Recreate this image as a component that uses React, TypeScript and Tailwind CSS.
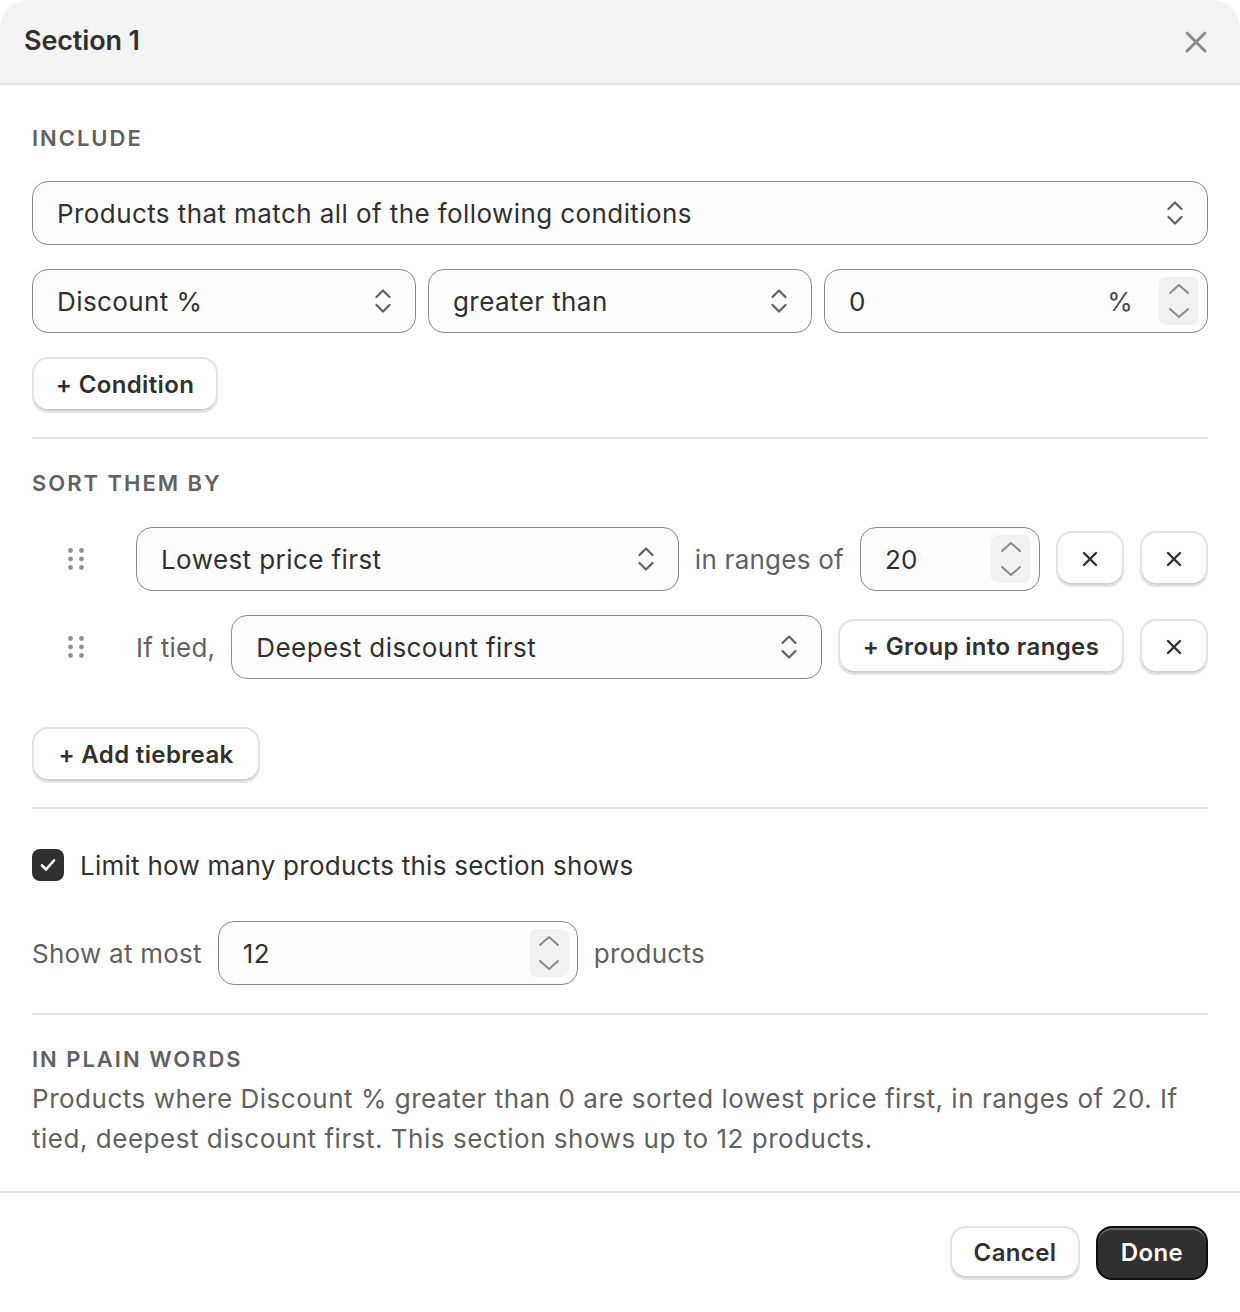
import React from "react";

const SelectIcon = () => (
  <svg width="16" height="26" viewBox="0 0 16 26" fill="none" className="shrink-0">
    <path d="M1.5 9 L8 2.5 L14.5 9" stroke="#616161" strokeWidth="2.2" strokeLinecap="round" strokeLinejoin="round" />
    <path d="M1.5 17 L8 23.5 L14.5 17" stroke="#616161" strokeWidth="2.2" strokeLinecap="round" strokeLinejoin="round" />
  </svg>
);

const Stepper = () => (
  <div className="flex h-12 w-10 shrink-0 items-center justify-center rounded-lg bg-[#f1f1f1]">
    <svg width="40" height="48" viewBox="0 0 40 48" fill="none">
      <path d="M11 16 L20 8 L29 16" stroke="#8a8a8a" strokeWidth="2" strokeLinecap="round" strokeLinejoin="round" />
      <path d="M11 32 L20 40 L29 32" stroke="#8a8a8a" strokeWidth="2" strokeLinecap="round" strokeLinejoin="round" />
    </svg>
  </div>
);

const XIcon = ({ size = 16, color = "#303030", width = 2.4 }: { size?: number; color?: string; width?: number }) => (
  <svg width={size} height={size} viewBox="0 0 16 16" fill="none">
    <path d="M2 2 L14 14 M14 2 L2 14" stroke={color} strokeWidth={width} strokeLinecap="round" />
  </svg>
);

const Handle = () => (
  <div className="flex w-[88px] shrink-0 justify-center">
    <svg width="16" height="22" viewBox="0 0 16 22" fill="#8f8f8f">
      <circle cx="2.5" cy="2.5" r="2.4" />
      <circle cx="13.5" cy="2.5" r="2.4" />
      <circle cx="2.5" cy="11" r="2.4" />
      <circle cx="13.5" cy="11" r="2.4" />
      <circle cx="2.5" cy="19.5" r="2.4" />
      <circle cx="13.5" cy="19.5" r="2.4" />
    </svg>
  </div>
);

function Select({ label, className }: { label: string; className: string }) {
  return (
    <div
      className={`flex h-16 items-center justify-between rounded-2xl border-[1.5px] border-[#8a8a8a] bg-[#fdfdfd] pl-6 pr-6 text-[26px] tracking-[0.016em] text-[#303030] ${className}`}
    >
      <span className="truncate">{label}</span>
      <SelectIcon />
    </div>
  );
}

function SecondaryButton({ children, className }: { children: React.ReactNode; className: string }) {
  return (
    <button
      className={`flex shrink-0 items-center justify-center rounded-2xl border-2 border-[#e3e3e3] bg-white text-[24px] font-semibold tracking-[0.015em] text-[#303030] shadow-[inset_0_-2px_0_#cfcfcf] ${className}`}
    >
      {children}
    </button>
  );
}

const SectionLabel = ({ children }: { children: React.ReactNode }) => (
  <div className="h-6 text-[22px] font-semibold uppercase leading-6 tracking-[0.09em] text-[#616161]">{children}</div>
);

const Divider = ({ className }: { className: string }) => <div className={`h-[2px] bg-[#e3e3e3] ${className}`} />;

export default function App() {
  return (
    <div className="flex min-h-[1312px] w-[1240px] flex-col bg-white text-[#303030]" style={{ fontFamily: "Inter, 'Noto Sans', sans-serif" }}>
      {/* header */}
      <div className="flex h-[85px] shrink-0 items-center justify-between rounded-t-[28px] border-b-2 border-[#e3e3e3] bg-[#f3f3f3] pl-6 pr-8">
        <div className="text-[27px] font-semibold tracking-[-0.005em] text-[#303030]">Section 1</div>
        <XIcon size={24} color="#8a8a8a" width={2} />
      </div>

      {/* body */}
      <div className="flex flex-col px-8 pb-8 pt-[41px] tracking-[0.016em]">
        <SectionLabel>Include</SectionLabel>
        <Select label="Products that match all of the following conditions" className="mt-[31px] w-full" />
        <div className="mt-6 grid grid-cols-3 gap-3">
          <Select label="Discount %" className="min-w-0" />
          <Select label="greater than" className="min-w-0" />
          <div className="flex h-16 min-w-0 items-center rounded-2xl border-[1.5px] border-[#8a8a8a] bg-[#fdfdfd] pl-6 pr-2 text-[26px]">
            <span className="flex-1">0</span>
            <span className="mr-[26px] text-[#4a4a4a]">%</span>
            <Stepper />
          </div>
        </div>
        <SecondaryButton className="mt-6 h-14 w-[186px]">+ Condition</SecondaryButton>

        <Divider className="mt-6" />

        <div className="mt-8">
          <SectionLabel>Sort them by</SectionLabel>
        </div>

        <div className="mt-8 flex items-center gap-4">
          <Handle />
          <Select label="Lowest price first" className="min-w-0 flex-1" />
          <span className="shrink-0 text-[26px] text-[#616161]">in ranges of</span>
          <div className="flex h-16 w-[180px] shrink-0 items-center rounded-2xl border-[1.5px] border-[#8a8a8a] bg-[#fdfdfd] pl-6 pr-2 text-[26px]">
            <span className="flex-1">20</span>
            <Stepper />
          </div>
          <SecondaryButton className="h-14 w-[68px]">
            <XIcon />
          </SecondaryButton>
          <SecondaryButton className="h-14 w-[68px]">
            <XIcon />
          </SecondaryButton>
        </div>

        <div className="mt-6 flex items-center gap-4">
          <Handle />
          <span className="shrink-0 text-[26px] text-[#616161]">If tied,</span>
          <Select label="Deepest discount first" className="min-w-0 flex-1" />
          <SecondaryButton className="h-14 w-[286px]">+ Group into ranges</SecondaryButton>
          <SecondaryButton className="h-14 w-[68px]">
            <XIcon />
          </SecondaryButton>
        </div>

        <SecondaryButton className="mt-12 h-14 w-[228px]">+ Add tiebreak</SecondaryButton>

        <Divider className="mt-6" />

        <div className="mt-10 flex h-8 items-center gap-4">
          <div className="flex h-8 w-8 items-center justify-center rounded-lg bg-[#303030]">
            <svg width="20" height="20" viewBox="0 0 20 20" fill="none">
              <path d="M4 10.5 L8 14.5 L16 5.5" stroke="#fff" strokeWidth="2.6" strokeLinecap="round" strokeLinejoin="round" />
            </svg>
          </div>
          <span className="text-[26px] text-[#303030]">Limit how many products this section shows</span>
        </div>

        <div className="mt-10 flex items-center gap-4">
          <span className="text-[26px] text-[#616161]">Show at most</span>
          <div className="flex h-16 w-[360px] items-center rounded-2xl border-[1.5px] border-[#8a8a8a] bg-[#fdfdfd] pl-6 pr-2 text-[26px]">
            <span className="flex-1">12</span>
            <Stepper />
          </div>
          <span className="text-[26px] text-[#616161]">products</span>
        </div>

        <Divider className="mt-7" />

        <div className="mt-8">
          <SectionLabel>In plain words</SectionLabel>
        </div>
        <p className="mt-2 text-[26px] leading-[40px] tracking-[0.02em] text-[#616161]">
          Products where Discount % greater than 0 are sorted lowest price first, in ranges of 20. If tied, deepest discount first. This
          section shows up to 12 products.
        </p>
      </div>

      {/* footer */}
      <div className="flex h-[121px] items-center justify-end gap-4 border-t-2 border-[#e3e3e3] pr-8">
        <SecondaryButton className="h-[54px] w-[130px]">Cancel</SecondaryButton>
        <button className="flex h-[54px] w-[112px] items-center justify-center rounded-2xl border-2 border-[#0c0c0c] bg-[#303030] text-[24px] font-semibold tracking-[0.015em] text-white shadow-[inset_0_2px_0_rgba(255,255,255,0.25)]">
          Done
        </button>
      </div>
    </div>
  );
}
